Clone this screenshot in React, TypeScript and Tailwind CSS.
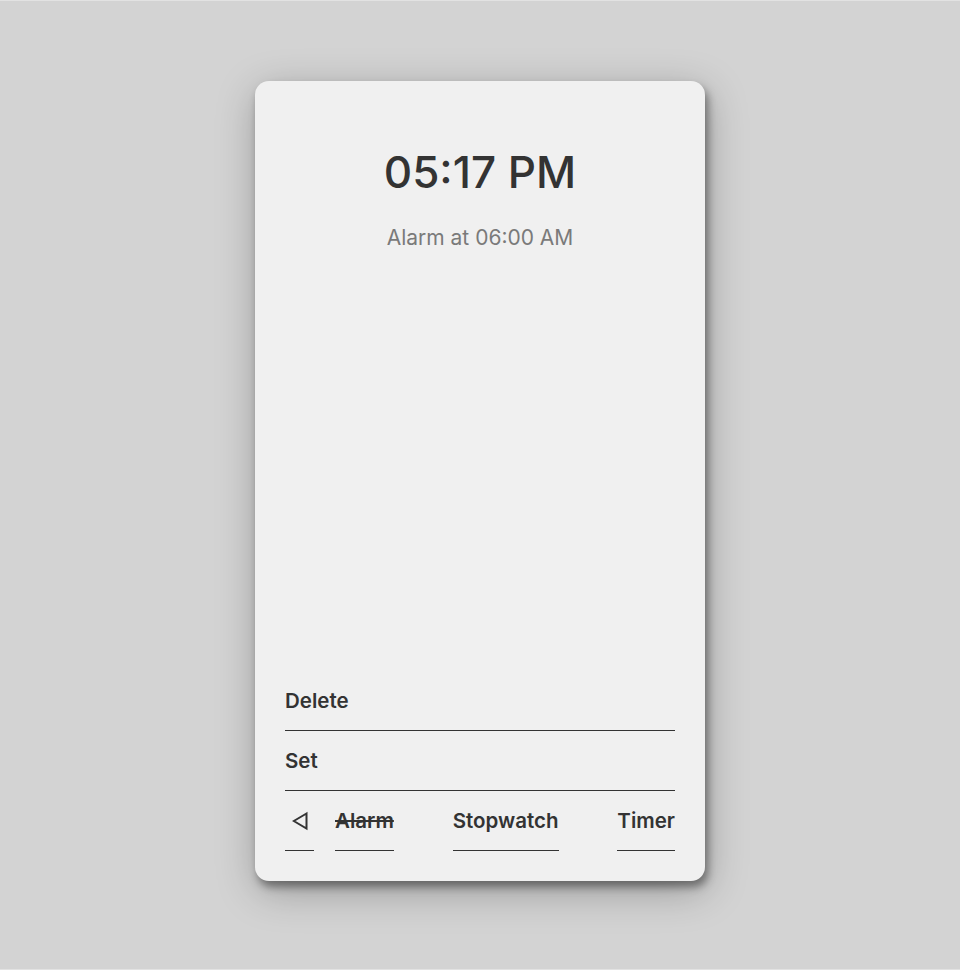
import React from "react";

export default function App() {
  return (
    <div
      className="w-[960px] h-[970px] bg-[#d3d3d3] border-y border-[#e2e2e2] flex items-start justify-center pt-[80px]"
      style={{ fontFamily: "Inter, 'Noto Sans', sans-serif" }}
    >
      <div className="w-[450px] h-[800px] rounded-[14px] bg-[#f0f0f0] shadow-[3px_6px_8px_rgba(0,0,0,0.4),2px_10px_40px_rgba(0,0,0,0.28)] flex flex-col px-[30px] pb-[30px] text-[#333]">
        <div className="pt-[65px] text-center text-[44px] leading-[52px] font-medium text-[#333]">
          05:17 PM
        </div>
        <div className="mt-[26px] text-center text-[21px] leading-7 text-[#7a7a7a]">
          Alarm at 06:00 AM
        </div>
        <div className="flex-1" />
        <div className="pt-4 pb-[15px] border-b border-[#333] text-[20.5px] leading-7 font-semibold">
          Delete
        </div>
        <div className="pt-4 pb-[15px] border-b border-[#333] text-[20.5px] leading-7 font-semibold">
          Set
        </div>
        <div className="flex justify-between text-[20.5px] leading-7 font-semibold">
          <div className="flex gap-[21px]">
            <div className="pt-4 pb-[15px] border-b border-[#333] w-[29px] flex justify-center">
              <svg width="16" height="28" viewBox="0 0 16 28" fill="none">
                <path d="M14.5 6.5 L1.8 14 L14.5 21.5 Z" stroke="#333" strokeWidth="2" strokeLinejoin="miter" />
              </svg>
            </div>
            <div className="pt-4 pb-[15px] border-b border-[#333] line-through">Alarm</div>
          </div>
          <div className="pt-4 pb-[15px] border-b border-[#333]">Stopwatch</div>
          <div className="pt-4 pb-[15px] border-b border-[#333]">Timer</div>
        </div>
      </div>
    </div>
  );
}
